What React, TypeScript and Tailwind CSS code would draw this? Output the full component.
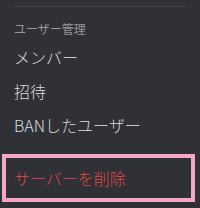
export default function App() {
  return (
    <div
      className="w-[200px] h-[208px] bg-[#2f3136] overflow-hidden"
      style={{ fontFamily: '"Noto Sans CJK JP", "Noto Sans", sans-serif' }}
    >
      <div className="pt-[6px]">
        <div className="mx-[14px] h-px bg-[#3f4147]" />
      </div>
      <div className="pl-[14px] pt-[14px] text-[12px] leading-[16px] text-[#96989d]">ユーザー管理</div>
      <div className="flex flex-col pt-[3px] font-light">
        <div className="pl-[14px] h-[34px] flex items-center text-[16px] text-[#dcddde]">メンバー</div>
        <div className="pl-[14px] h-[34px] flex items-center text-[16px] text-[#dcddde]">招待</div>
        <div className="pl-[14px] h-[34px] flex items-center text-[16px] text-[#dcddde]">BANしたユーザー</div>
      </div>
      <div className="mt-[12px] ml-[2px] w-[193px] h-[48px] border-4 border-[#f4a7c6] flex items-center pl-[8px] text-[16px] font-light text-[#e2464a]">
        サーバーを削除
      </div>
    </div>
  );
}
